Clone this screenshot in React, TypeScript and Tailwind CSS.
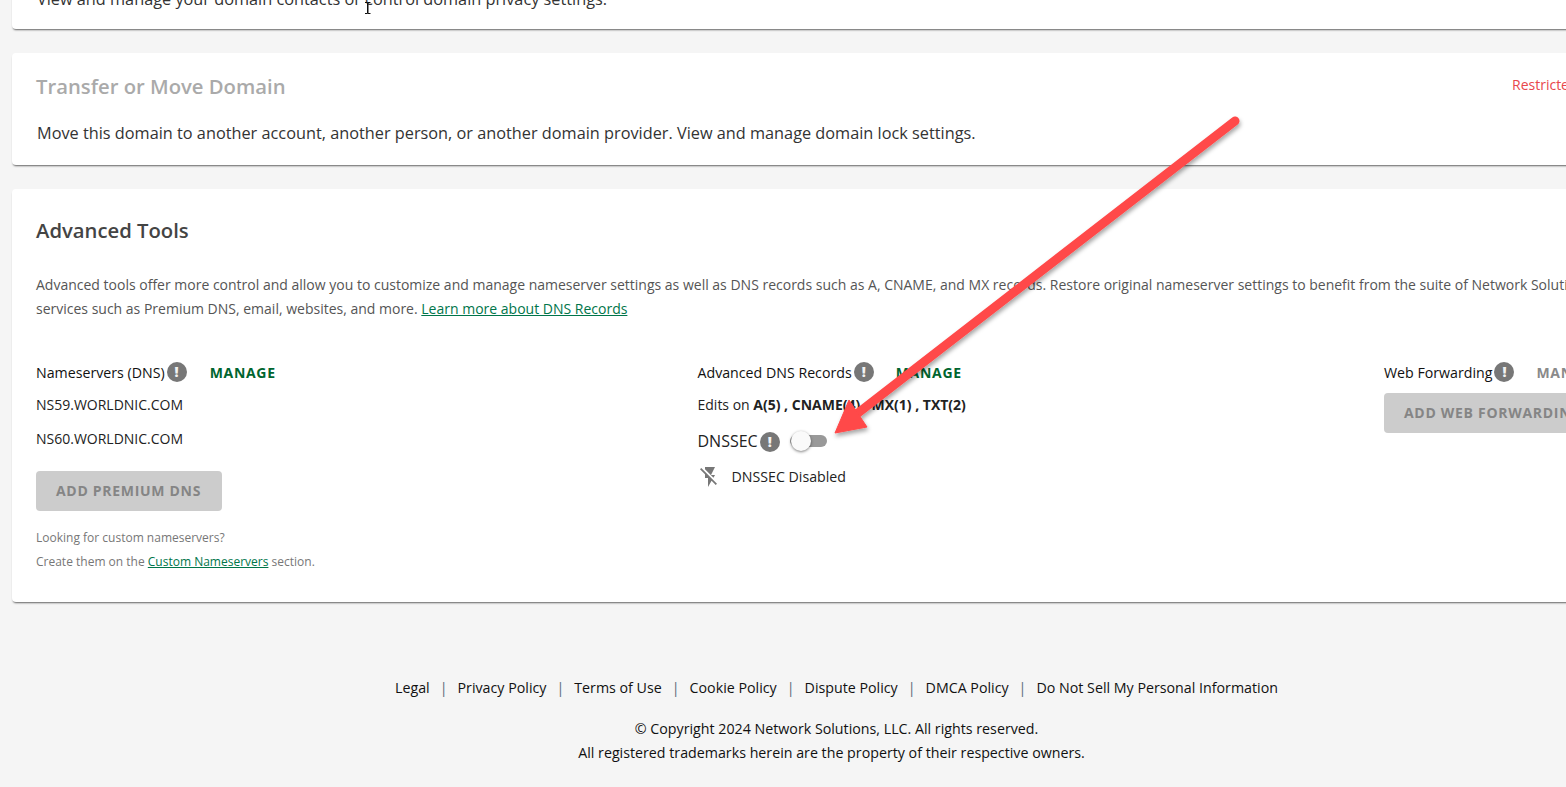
import { MdFlashOff } from "react-icons/md";

function InfoBadge() {
  return (
    <span className="inline-flex h-5 w-5 items-center justify-center rounded-full bg-[#777] text-[14px] font-extrabold leading-none text-[#f2f2f2]">
      !
    </span>
  );
}

function Manage({ muted }: { muted?: boolean }) {
  return (
    <span className={`text-[14px] font-bold tracking-[0.7px] ${muted ? "text-[#8a8a8a]" : "text-[#00652f]"}`}>
      MANAGE
    </span>
  );
}

function DisabledButton({ label }: { label: string }) {
  return (
    <div className="flex h-10 w-fit items-center whitespace-nowrap rounded bg-[#ccc] pb-px pl-5 pr-[21px] text-[14px] font-bold tracking-[0.7px] text-[#858585]">
      {label}
    </div>
  );
}

function ColumnHead({ title, gap }: { title: string; gap: string }) {
  return (
    <div className={`flex h-5 items-center ${gap}`}>
      <div className="flex items-center gap-[2px]">
        <span className="pt-px text-[14.2px] text-[#111]">{title}</span>
        <InfoBadge />
      </div>
      <Manage muted={title === "Web Forwarding"} />
    </div>
  );
}

const footerLinks = [
  "Legal",
  "Privacy Policy",
  "Terms of Use",
  "Cookie Policy",
  "Dispute Policy",
  "DMCA Policy",
  "Do Not Sell My Personal Information",
];

export default function App() {
  return (
    <div className="relative h-[787px] w-[1566px] overflow-hidden bg-[#f5f5f5] font-['Open_Sans',sans-serif]">
      <div className="ml-3 flex w-[1649px] flex-col gap-6">
        <section className="-mt-[30px] h-[59px] rounded-b bg-white px-6 pt-[17px] shadow-[0_2px_2px_-1px_rgba(0,0,0,0.6)]">
          <p className="pl-px text-[16.3px] leading-6 text-[#333]">
            View and manage your domain contacts or control domain privacy settings.
          </p>
        </section>

        <section className="h-[112px] rounded bg-white px-6 pt-[19px] shadow-[0_2px_2px_-1px_rgba(0,0,0,0.6)]">
          <div className="flex items-start justify-between">
            <h2 className="text-[20.25px] font-semibold leading-7 text-[#aaa]">Transfer or Move Domain</h2>
            <span className="w-[125px] pt-px text-[14px] leading-6 text-[#e8474c]">Restricted</span>
          </div>
          <p className="mt-[21px] pl-px text-[16.3px] leading-6 text-[#333]">
            Move this domain to another account, another person, or another domain provider. View and manage domain lock settings.
          </p>
        </section>

        <section className="h-[413px] rounded bg-white px-6 pt-[27px] shadow-[0_2px_2px_-1px_rgba(0,0,0,0.6)]">
          <h2 className="text-[20.25px] font-semibold leading-7 text-[#444]">Advanced Tools</h2>
          <p className="mt-[29px] w-[1600px] text-[14px] leading-6 text-[#555]">
            Advanced tools offer more control and allow you to customize and manage nameserver settings as well as DNS records such as A, CNAME, and MX records. Restore original nameserver settings to benefit from the suite of Network Solutions
            <br />
            services such as Premium DNS, email, websites, and more.{" "}
            <span className="text-[#00754a] underline">Learn more about DNS Records</span>
          </p>

          <div className="mt-[41px] grid grid-cols-[661.5px_686.5px_1fr]">
            <div>
              <ColumnHead title="Nameservers (DNS)" gap="gap-[23px]" />
              <p className="mt-[13px] text-[14px] leading-5 text-[#222]">NS59.WORLDNIC.COM</p>
              <p className="mt-[14px] text-[14px] leading-5 text-[#222]">NS60.WORLDNIC.COM</p>
              <div className="mt-[22px]">
                <DisabledButton label="ADD PREMIUM DNS" />
              </div>
              <p className="mt-[15px] text-[12px] leading-6 text-[#777]">
                Looking for custom nameservers?
                <br />
                Create them on the <span className="text-[#00754a] underline">Custom Nameservers</span> section.
              </p>
            </div>

            <div>
              <ColumnHead title="Advanced DNS Records" gap="gap-[22px]" />
              <p className="mt-[13px] text-[14px] leading-5 text-[#222]">
                Edits on <b>A(5) , CNAME(4) , MX(1) , TXT(2)</b>
              </p>
              <div className="mt-[16px] flex h-5 items-center">
                <span className="text-[16px] text-[#222]">DNSSEC</span>
                <span className="ml-[2px]">
                  <InfoBadge />
                </span>
                <div className="relative ml-[10px] h-[12px] w-[37px] rounded-full bg-[#999]">
                  <span className="absolute -top-1 left-px h-5 w-5 rounded-full bg-[#fafafa] shadow-[0_1px_3px_rgba(0,0,0,0.5)]" />
                </div>
              </div>
              <div className="mt-[16px] flex h-5 items-center">
                <MdFlashOff className="h-[24px] w-[24px] text-[#777]" />
                <span className="ml-[10px] text-[14.2px] text-[#222]">DNSSEC Disabled</span>
              </div>
            </div>

            <div>
              <ColumnHead title="Web Forwarding" gap="gap-[22px]" />
              <div className="mt-[11px]">
                <DisabledButton label="ADD WEB FORWARDING" />
              </div>
            </div>
          </div>
        </section>
      </div>

      <footer className="mt-[76px] flex w-[1673px] flex-col items-center text-[14.24px] text-[#111]">
        <div className="flex h-5 items-center">
          {footerLinks.map((link, i) => (
            <span key={link} className="flex items-center">
              {i > 0 && <span className="mx-[10px] text-[#5d6b78]">|</span>}
              {link}
            </span>
          ))}
        </div>
        <p className="mt-[19px] leading-6">© Copyright 2024 Network Solutions, LLC. All rights reserved.</p>
        <p className="mr-[10px] leading-6">All registered trademarks herein are the property of their respective owners.</p>
      </footer>

      {/* annotation drawn over the screenshot */}
      <svg className="absolute left-0 top-0" width="1566" height="787" viewBox="0 0 1566 787" fill="none">
        <defs>
          <filter id="arrowShadow" x="-10%" y="-10%" width="120%" height="120%">
            <feDropShadow dx="1" dy="3" stdDeviation="2" floodColor="#000" floodOpacity="0.35" />
          </filter>
        </defs>
        <g filter="url(#arrowShadow)">
          <path d="M1235 121 L858 413" stroke="#ff4848" strokeWidth="9" strokeLinecap="round" />
          <path d="M835 433 L849 400 L867 427 Z" fill="#ff4848" stroke="#ff4848" strokeWidth="1" strokeLinejoin="round" />
        </g>
        <path d="M365 2.500h2.500v11h-2.500M370.500 2.500h-2.500v11h2.500" stroke="#111" strokeWidth="1" />
      </svg>
    </div>
  );
}
